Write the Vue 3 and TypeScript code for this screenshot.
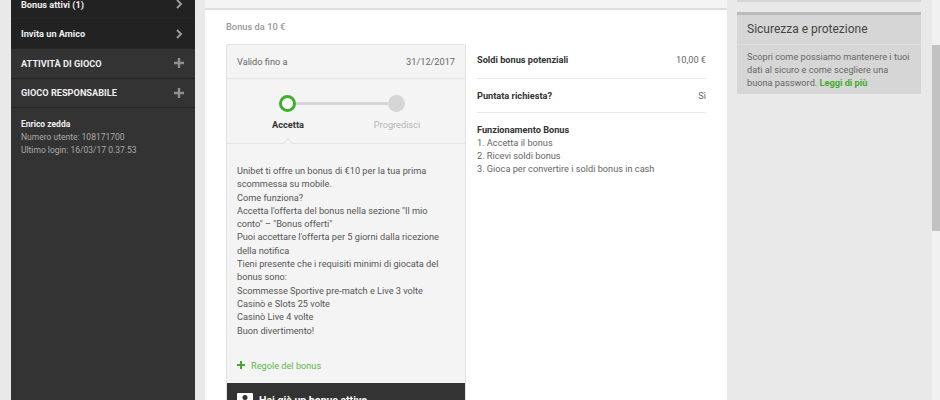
<script setup lang="ts">
const body: string[] = [
  'Unibet ti offre un bonus di €10 per la tua prima scommessa su mobile.',
  'Come funziona?',
  'Accetta l\'offerta del bonus nella sezione "Il mio conto" – "Bonus offerti"',
  'Puoi accettare l\'offerta per 5 giorni dalla ricezione della notifica',
  'Tieni presente che i requisiti minimi di giocata del bonus sono:',
  'Scommesse Sportive pre-match e Live 3 volte',
  'Casinò e Slots 25 volte',
  'Casinò Live 4 volte',
  'Buon divertimento!',
]
const steps: string[] = ['1. Accetta il bonus', '2. Ricevi soldi bonus', '3. Gioca per convertire i soldi bonus in cash']
</script>

<template>
  <div class="page">
    <aside class="side">
      <a class="row dark first"><span>Bonus attivi (1)</span><svg width="10" height="10" viewBox="0 0 10 10"><path d="M3 1l4 4-4 4" fill="none" stroke="#9a9a9a" stroke-width="2"/></svg></a>
      <a class="row dark"><span>Invita un Amico</span><svg width="10" height="10" viewBox="0 0 10 10"><path d="M3 1l4 4-4 4" fill="none" stroke="#9a9a9a" stroke-width="2"/></svg></a>
      <a class="row sect"><span>ATTIVITÀ DI GIOCO</span><svg width="10" height="10" viewBox="0 0 10 10"><path d="M0 5h10M5 0v10" stroke="#8f8f8f" stroke-width="2.400"/></svg></a>
      <a class="row sect last"><span>GIOCO RESPONSABILE</span><svg width="10" height="10" viewBox="0 0 10 10"><path d="M0 5h10M5 0v10" stroke="#8f8f8f" stroke-width="2.400"/></svg></a>
      <div class="user">
        <strong>Enrico zedda</strong>
        <div>Numero utente: 108171700</div>
        <div>Ultimo login: 16/03/17 0.37.53</div>
      </div>
    </aside>

    <main class="main">
      <div class="topstrip"></div>
      <section class="panel">
        <h2 class="title">Bonus da 10 €</h2>
        <div class="cols">
          <div class="card">
            <div class="valid"><span>Valido fino a</span><span>31/12/2017</span></div>
            <div class="stepper">
              <div class="track">
                <span class="dot on"></span>
                <span class="line"></span>
                <span class="dot"></span>
              </div>
              <div class="labels"><b>Accetta</b><span>Progredisci</span></div>
              <span class="notch"></span>
            </div>
            <div class="desc">
              <p v-for="line in body" :key="line">{{ line }}</p>
            </div>
            <a class="rules"><svg width="8" height="8" viewBox="0 0 8 8"><path d="M0 4h8M4 0v8" stroke="#3fae2a" stroke-width="2"/></svg>Regole del bonus</a>
            <div class="alert">
              <svg width="16" height="16" viewBox="0 0 16 16"><rect width="16" height="16" rx="1" fill="#fff"/><circle cx="8" cy="4.500" r="2.500" fill="#333"/><rect x="6.500" y="8" width="3" height="8" fill="#333"/></svg>
              <span>Hai già un bonus attivo</span>
            </div>
          </div>
          <div class="info">
            <div class="kv one"><b>Soldi bonus potenziali</b><span>10,00 €</span></div>
            <div class="kv"><b>Puntata richiesta?</b><span>Sì</span></div>
            <div class="how">
              <b>Funzionamento Bonus</b>
              <div v-for="s in steps" :key="s">{{ s }}</div>
            </div>
          </div>
        </div>
      </section>
    </main>

    <aside class="right">
      <div class="stub"></div>
      <div class="box">
        <h3>Sicurezza e protezione</h3>
        <p>Scopri come possiamo mantenere i tuoi dati al sicuro e come scegliere una buona password. <a>Leggi di più</a></p>
      </div>
    </aside>

    <div class="scroll"><span></span></div>
  </div>
</template>

<style>
html, body { margin: 0; overflow: hidden; }
</style>

<style scoped>
.page {
  width: 940px; height: 400px; overflow: hidden; display: flex;
  background: #e9e9e9; font-family: Roboto, "Liberation Sans", sans-serif;
  font-size: 9.200px; color: #555;
}
.side { width: 184px; margin-left: 11px; height: 400px; background: #333; flex: none; }
.row { display: flex; justify-content: space-between; align-items: center; height: 30px; padding: 0 11px 0 10px; box-sizing: border-box; color: #eee; font-weight: 700; border-bottom: 1px solid #262626; }
.dark { background: #222; }
.first { height: 19px; padding-bottom: 10px; }
.sect { padding-bottom: 1px; }
.last { height: 29px; }
.user { padding: 10px; line-height: 13px; color: #aaa; font-size: 8.500px; }
.user strong { color: #eee; display: block; }
.main { width: 522px; margin-left: 10px; flex: none; }
.topstrip { height: 8px; background: #f4f4f4; border-bottom: 2px solid #dedede; }
.panel { background: #fff; padding: 10px 21px 0; height: 390px; box-sizing: border-box; }
.title { margin: 0 0 12px; font-size: 9.300px; line-height: 13px; height: 12px; font-weight: 500; color: #999; }
.cols { display: flex; }
.card { width: 240px; flex: none; box-sizing: border-box; background: #f4f4f4; border: 1px solid #e2e2e2; border-bottom: 0; border-radius: 2px 2px 0 0; }
.valid { display: flex; justify-content: space-between; height: 34px; align-items: center; padding: 0 10px; border-bottom: 1px solid #e4e4e4; color: #666; box-sizing: border-box; }
.stepper { position: relative; height: 64px; border-bottom: 1px solid #e4e4e4; }
.track { display: flex; align-items: center; padding: 16px 0 0 52px; }
.dot { width: 17px; height: 17px; border-radius: 50%; background: #d5d5d5; box-sizing: border-box; flex: none; }
.dot.on { background: #fff; border: 3px solid #3fae2a; }
.line { width: 92px; height: 3px; background: #d5d5d5; flex: none; }
.labels { display: flex; gap: 49px; padding: 7px 0 0 31px; line-height: 12px; }
.labels b, .labels span { width: 60px; flex: none; text-align: center; }
.labels b { color: #333; font-weight: 700; }
.labels span { color: #b4b4b4; }
.notch { position: absolute; left: 57px; bottom: -5px; width: 8px; height: 8px; box-sizing: border-box; transform: rotate(45deg); background: #f4f4f4; border-left: 1px solid #e4e4e4; border-top: 1px solid #e4e4e4; }
.desc { padding: 20px 10px 0; line-height: 13.300px; color: #555; height: 203px; box-sizing: border-box; }
.desc p { margin: 0; }
.rules { display: flex; align-items: center; gap: 6px; padding-left: 10px; color: #5cb84a; height: 36px; }
.alert { background: #333; height: 40px; display: flex; align-items: flex-start; gap: 6px; padding: 10px; box-sizing: border-box; color: #fff; font-weight: 700; font-size: 10.500px; line-height: 16px; }
.info { flex: 1; padding-left: 11px; }
.kv { display: flex; justify-content: space-between; align-items: center; height: 34px; box-sizing: border-box; border-bottom: 1px solid #e9e9e9; color: #666; }
.kv.one { height: 35px; padding-bottom: 3px; }
.kv b { color: #333; font-weight: 700; }
.how { padding-top: 10px; line-height: 13px; color: #666; }
.how b { color: #333; display: block; font-weight: 700; }
.right { width: 184px; margin-left: 10px; flex: none; }
.stub { height: 2px; background: #d6d6d6; }
.box { margin-top: 10px; background: #d6d6d6; border-top: 3px solid #bbb; }
.box h3 { margin: 0; font-size: 12px; font-weight: 400; line-height: 29px; padding: 0 10px; color: #444; border-bottom: 1px solid #e0e0e0; }
.box p { margin: 0; padding: 5px 10px; line-height: 13px; color: #666; }
.box a { color: #3fae2a; font-weight: 700; }
.scroll { width: 8px; margin-left: 11px; flex: none; position: relative; background: #f1f1f1; }
.scroll span { position: absolute; top: 45px; left: 0; width: 8px; height: 186px; background: #c2c2c2; }
</style>
